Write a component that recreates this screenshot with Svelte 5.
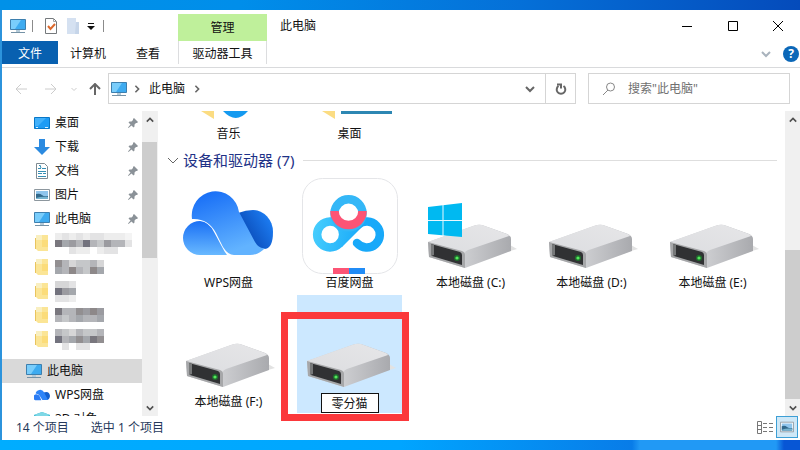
<script>
  const pinned = [
    { name: "桌面", icon: "desktop" },
    { name: "下载", icon: "download" },
    { name: "文档", icon: "document" },
    { name: "图片", icon: "picture" },
    { name: "此电脑", icon: "monitor" },
  ]

  // folders whose names are hidden behind a mosaic, "." is an empty cell
  const hidden = [
    ["fefefeefffg", "6a9b5bc9bbe", "..eff.fee.."],
    ["8bdccbd", "ab7bc7a"],
    ["dde", "59a", "eef"],
    ["6bb8979", "bcbabba"],
    ["bcdbccb", "5ba8a68", ".e.ee.."],
  ]

  const tones = {
    5: "#73737e",
    6: "#79777e",
    7: "#8d8889",
    8: "#928f91",
    9: "#9b9ba0",
    a: "#a4a7ac",
    b: "#b4b5b9",
    c: "#c5c7c9",
    d: "#d6d6d7",
    e: "#e3e3e4",
    f: "#ededed",
    g: "#f4f4f4",
  }

  const drives = [
    { name: "WPS网盘", icon: "wps" },
    { name: "百度网盘", icon: "baidu" },
    { name: "本地磁盘 (C:)", icon: "system" },
    { name: "本地磁盘 (D:)", icon: "drive" },
    { name: "本地磁盘 (E:)", icon: "drive" },
    { name: "本地磁盘 (F:)", icon: "drive" },
  ]

  let newName = $state("零分猫")
</script>

{#snippet monitor()}
  <svg class="icon" viewBox="0 0 16 16" aria-hidden="true">
    <path d="M0.5 1.5h15v10H0.5z" fill="#3eabf0" stroke="#3d7fae" />
    <path d="M1 2h10L5 11H1z" fill="#79cdfb" />
    <path d="M6 12h4v2H6z" fill="#b4cad8" />
    <path d="M1 14.5h14" stroke="#7592a6" />
  </svg>
{/snippet}

{#snippet picture()}
  <svg class="icon" viewBox="0 0 16 16" aria-hidden="true">
    <path d="M0.5 2.5h15v11H0.5z" fill="#fff" stroke="#8d979e" />
    <path d="M2 4h12v8H2z" fill="#8fc5ec" />
    <path d="M2 7q4-1 6 1t6 1v3H2z" fill="#31698b" />
    <path d="M2 11q6-2 12-1v2H2z" fill="#76b4cf" />
  </svg>
{/snippet}

{#snippet chevron(d)}
  <svg class="chevron" viewBox="0 0 10 10" aria-hidden="true"><path {d} /></svg>
{/snippet}

{#snippet scrollbar(before, size)}
  <div class="scrollbar">
    <button aria-label="向上滚动">{@render chevron("M1 7l4-4 4 4")}</button>
    <div class="track">
      <div style="flex-grow: {before}"></div>
      <div class="thumb" style="flex-grow: {size}"></div>
      <div style="flex-grow: {100 - before - size}"></div>
    </div>
    <button aria-label="向下滚动">{@render chevron("M1 3l4 4 4-4")}</button>
  </div>
{/snippet}

{#snippet disk()}
  <path d="M41 89L87 73l7-2-7-4z" fill="#e2e2e2" />
  <path d="M5 64L50 48q5-2 9-1l25 9q4 2 4 5v12L42 90 6 79z" fill="url(#disk-side)" />
  <path d="M5 64L50 48q5-2 9-1l25 9q2 1 2 2L45 72q-3 1-4 4z" fill="url(#disk-top)" />
  <path d="M5 64l34 9q3 1 3 4v13L6 79z" fill="#a6a7a9" />
  <path d="M8 66l29 8q2 1 2 3v10L9 78z" fill="#303133" />
  <path d="M8 66l3 1v10l-3 1z" fill="#77797a" />
  <circle cx="34" cy="80" r="3" fill="#206b2e" />
  <circle cx="34" cy="80" r="1.6" fill="#53ea5b" />
{/snippet}

{#snippet driveIcon(kind)}
  <svg class="drive-icon" viewBox="0 0 96 96" aria-hidden="true">
    {#if kind === "wps"}
      <path d="M57 35Q65 32 72 32A20 22 0 0 1 92 54Q92 71 83 71Q77 71 72 64z" fill="url(#wps-right)" />
      <path
        d="M11 41A23.5 24 0 0 1 58 34L74 64Q78 71 84 70Q78 77 69 77H53Q47 77 42 69L35 55Q27 40 11 41z"
        fill="url(#wps-mid)"
      />
      <path d="M19 77A17 17 0 1 1 19 43Q28 44 33 54L40 67Q43 73 46 77z" fill="url(#wps-left)" />
    {:else if kind === "baidu"}
      <rect x="0.5" y="0.5" width="95" height="95" rx="20" fill="#fff" stroke="#e4e5e8" />
      <g fill="none" stroke-width="8.5" stroke-linecap="round">
        <path d="M37 66A13 13 0 1 1 37 47" stroke="url(#baidu-left)" />
        <path d="M37 47A13 13 0 0 1 37 66L56 47" stroke="url(#baidu-left)" />
        <path d="M56 47A13 13 0 1 1 55 65" stroke="#18a9f9" />
        <circle cx="46.500" cy="35.300" r="14" stroke="#34b7f7" />
        <path d="M32.500 33a14 14 0 1 0 28 0" stroke="#fc5475" stroke-linecap="butt" />
      </g>
      <path d="M31 90h16v6H31z" fill="#fc5475" />
      <path d="M47 90h16v6H47z" fill="#218cf6" />
    {:else}
      {@render disk()}
      {#if kind === "system"}
        <path d="M5 29l34-4v34L5 56z" fill="#00b9f1" />
        <path d="M20 27v31M5 42.5h34" stroke="#e9f8fe" />
      {/if}
    {/if}
  </svg>
{/snippet}

<svg class="defs" aria-hidden="true">
  <defs>
    <linearGradient id="disk-top" x1="0" y1="1" x2="1" y2="0">
      <stop offset="0" stop-color="#dcdde0" />
      <stop offset="1" stop-color="#e6e6e8" />
    </linearGradient>
    <linearGradient id="disk-side" x1="0" y1="0" x2="1" y2="0">
      <stop offset="0.4" stop-color="#cfd0d3" />
      <stop offset="1" stop-color="#a9aaae" />
    </linearGradient>
    <linearGradient id="wps-mid" x1="0" y1="0" x2="0.4" y2="1">
      <stop offset="0" stop-color="#1269f6" />
      <stop offset="1" stop-color="#62b3ff" />
    </linearGradient>
    <linearGradient id="wps-left" x1="0" y1="0" x2="0" y2="1">
      <stop offset="0" stop-color="#1a70f5" />
      <stop offset="1" stop-color="#69b9ff" />
    </linearGradient>
    <linearGradient id="wps-right" x1="0.9" y1="0.3" x2="0.3" y2="0.7">
      <stop offset="0" stop-color="#1b79ee" />
      <stop offset="1" stop-color="#0c50bd" />
    </linearGradient>
    <linearGradient id="baidu-left" gradientUnits="userSpaceOnUse" x1="12" y1="50" x2="60" y2="60">
      <stop offset="0" stop-color="#46cdfd" />
      <stop offset="1" stop-color="#18a9f9" />
    </linearGradient>
  </defs>
</svg>

<div class="desktop">
  <div class="window">
    <header class="ribbon">
      <div class="quick">
        {@render monitor()}
        <i class="sep"></i>
        <button aria-label="属性">
          <svg class="icon" viewBox="0 0 16 16">
            <path d="M2.5 0.5h8l3 3v12h-11z" fill="#fff" stroke="#75797c" />
            <path d="M10.5 0.5v3h3" fill="none" stroke="#a1a4a6" />
            <path d="M5 8l2.5 3L12 6" fill="none" stroke="#dc692d" stroke-width="2" />
          </svg>
        </button>
        <button aria-label="新建文件夹">
          <svg class="icon" viewBox="0 0 16 16">
            <path d="M2 0h9v4h3v12H2z" fill="#d5e1f1" />
            <path d="M11 4h3v12h-4z" fill="#c6d5e9" />
          </svg>
        </button>
        <button class="more" aria-label="自定义快速访问工具栏">
          <svg viewBox="0 0 8 8"><path d="M1 1.5h6" stroke="#111" /><path d="M0 4h8L4 8z" fill="#111" /></svg>
        </button>
        <i class="sep"></i>
      </div>
      <div class="manage">管理</div>
      <div class="title">
        <span>此电脑</span>
        <div class="controls">
          <button aria-label="最小化"><svg viewBox="0 0 10 10"><path d="M0 5.5h10" /></svg></button>
          <button aria-label="最大化"><svg viewBox="0 0 10 10"><path d="M0.5 0.5h9v9h-9z" /></svg></button>
          <button aria-label="关闭"><svg viewBox="0 0 10 10"><path d="M0 0l10 10M10 0L0 10" /></svg></button>
        </div>
      </div>
      <nav class="tabs">
        <button class="file">文件</button>
        <button>计算机</button>
        <button>查看</button>
      </nav>
      <button class="tools">驱动器工具</button>
      <div class="help">
        <button class="expand" aria-label="展开功能区">{@render chevron("M1 3l4 4 4-4")}</button>
        <button class="question" aria-label="帮助">?</button>
      </div>
    </header>

    <div class="location">
      <div class="history">
        <button class="off" aria-label="后退">
          <svg viewBox="0 0 12 12"><path d="M12 6H1M6 1L1 6l5 5" /></svg>
        </button>
        <button class="off" aria-label="前进">
          <svg viewBox="0 0 12 12"><path d="M0 6h11M6 1l5 5-5 5" /></svg>
        </button>
        <button class="off recent" aria-label="最近浏览的位置">
          <svg viewBox="0 0 12 12"><path d="M1 4l5 5 5-5" /></svg>
        </button>
        <button class="up" aria-label="上移">
          <svg viewBox="0 0 12 12"><path d="M6 12V1M1 6l5-5 5 5" /></svg>
        </button>
      </div>
      <div class="address">
        {@render monitor()}
        {@render chevron("M3 1l4 4-4 4")}
        <a href="#pc">此电脑</a>
        {@render chevron("M3 1l4 4-4 4")}
        <button class="drop" aria-label="以前的位置">{@render chevron("M1 3l4 4 4-4")}</button>
        <button class="refresh" aria-label="刷新">
          <svg viewBox="0 0 12 12"><path d="M8.500 3A4.300 4.300 0 1 1 3.500 3M2 1.500h4v4" /></svg>
        </button>
      </div>
      <label class="search">
        <svg viewBox="0 0 14 14" aria-hidden="true"><circle cx="8.5" cy="5" r="4" /><path d="M6 8L1 13" /></svg>
        <input type="text" aria-label="搜索" placeholder={'搜索"此电脑"'} />
      </label>
    </div>

    <div class="body">
      <aside>
        <nav class="tree">
          {#each pinned as item}
            <a href="#item">
              {#if item.icon === "monitor"}
                {@render monitor()}
              {:else if item.icon === "picture"}
                {@render picture()}
              {:else}
                <svg class="icon" viewBox="0 0 16 16" aria-hidden="true">
                  {#if item.icon === "desktop"}
                    <path d="M0.5 2.5h15v11H0.5z" fill="#1e9cf5" stroke="#0877c7" />
                    <path d="M1 3h11L4 11H1z" fill="#42b1fb" />
                    <path d="M2 12.5h2M11 12.5h3" stroke="#d9f0ff" />
                  {:else if item.icon === "download"}
                    <path d="M5 0h6v8h5l-8 8-8-8h5z" fill="#2b8ae0" />
                  {:else}
                    <path d="M2.5 0.5h8l3 3v12h-11z" fill="#fff" stroke="#7f8b92" />
                    <path d="M4 5.5h3M8 5.5h4M4 8.5h8M4 10.5h4M9 10.5h3M4 13.5h8M5 3l1-1 1 3" fill="none" stroke="#368fb5" />
                  {/if}
                </svg>
              {/if}
              <span>{item.name}</span>
              <svg class="pin" viewBox="0 0 10 10" aria-hidden="true">
                <path d="M6 0l4 4-1 1H8L6.500 6.500V8.500L5.500 9.500 3.500 7.500 0.500 10 0 9.500 2.500 6.500 0.500 4.500 1.500 3.500h2L5 2V1z" />
              </svg>
            </a>
          {/each}
          {#each hidden as rows}
            <a href="#folder" aria-label="文件夹">
              <svg class="icon" viewBox="0 0 16 16" aria-hidden="true">
                <path d="M2 0h12v16H4l-2-2z" fill="#fbe596" />
                <path d="M2 0h6v5H2z" fill="#f9efc0" />
                <path d="M8 5h6v7H8z" fill="#fbdc7a" />
                <path d="M1.500 3v11" stroke="#e9c45e" />
              </svg>
              <svg class="mosaic" viewBox="0 0 77 {rows.length * 7}" style="height: {rows.length * 7}px" aria-hidden="true">
                {#each rows as row, y}
                  {#each row as cell, x}
                    <rect x={x * 7} y={y * 7} width="7" height="7" fill={tones[cell] ?? "none"} />
                  {/each}
                {/each}
              </svg>
            </a>
          {/each}
          <a class="root current" href="#pc">{@render monitor()}<span>此电脑</span></a>
          <a href="#wps">
            <svg class="icon" viewBox="0 10 96 76" aria-hidden="true">
              <path d="M57 33Q92 20 96 54Q92 80 72 77z" fill="#1260cf" />
              <path d="M10 39A26 24 0 0 1 60 32L84 78H50L35 54Q27 40 10 39z" fill="#2d84f8" />
              <path d="M19 79A18 18 0 1 1 19 45Q29 46 34 56L44 79z" fill="#2b7cf4" />
            </svg>
            <span>WPS网盘</span>
          </a>
          <a href="#objects">
            <svg class="icon" viewBox="0 0 16 16" aria-hidden="true">
              <path d="M0 4l8-3 8 3v8l-8 4-8-4z" fill="#35b5d0" />
              <path d="M0 4l8-3 8 3-8 3z" fill="#7fd8e6" />
            </svg>
            <span>3D 对象</span>
          </a>
        </nav>
        {@render scrollbar(5, 43)}
      </aside>

      <main>
        <div class="grid folders">
          <a class="folder" href="#music">
            <svg viewBox="0 0 96 8" aria-hidden="true">
              <path d="M20 0h13v8z" fill="#fbdc82" />
              <path d="M42 0h25Q55 14 42 0z" fill="#149af0" />
            </svg>
            <span>音乐</span>
          </a>
          <a class="folder" href="#desktop">
            <svg viewBox="0 0 96 8" aria-hidden="true">
              <path d="M20 0h13v8z" fill="#fbdc82" />
              <path d="M39 0h51v3H39z" fill="#2d87b3" />
            </svg>
            <span>桌面</span>
          </a>
        </div>

        <button class="group">
          {@render chevron("M0 3l5 5 5-5")}
          <span>设备和驱动器 (7)</span>
          <i></i>
        </button>

        <div class="grid">
          {#each drives as drive}
            <a class="tile" href="#drive">
              {@render driveIcon(drive.icon)}
              <span>{drive.name}</span>
            </a>
          {/each}
          <div class="tile selected">
            {@render driveIcon("drive")}
            <input type="text" aria-label="重命名" bind:value={newName} />
            <div class="frame"></div>
          </div>
        </div>
      </main>
      {@render scrollbar(45, 55)}
    </div>

    <footer>
      <span>14 个项目</span>
      <span>选中 1 个项目</span>
      <div class="views">
        <button aria-label="详细信息">
          <svg class="list-icon" viewBox="0 0 16 13">
            <path d="M0.500 0.500h4v12h-4zM0.500 4.500h4M0.500 8.500h4" />
            <path d="M6 2.500h4M12 2.500h4M6 6.500h4M12 6.500h4M6 10.500h4M12 10.500h4" />
          </svg>
        </button>
        <button class="active" aria-label="大图标">{@render picture()}</button>
      </div>
    </footer>
  </div>
</div>

<style>
  :global(body) {
    margin: 0;
  }

  .desktop {
    box-sizing: border-box;
    display: flex;
    min-height: 100vh;
    padding: 10px 0 10px 2px;
    background:
      linear-gradient(90deg, #0091e8, #008eea 30%, #0570d8 65%, #054bbb) top / 100% 10px no-repeat,
      linear-gradient(90deg, #00adff, #00a5ff 50%, #087ce8 79%, #2199f5 80%, #2199f5 97%, #0756d5 98%) bottom / 100% 10px no-repeat,
      #2c93dc;
    font-family: "Noto Sans", "Noto Sans CJK SC", sans-serif;
    font-size: 12px;
    line-height: 18px;
    color: #111;
  }

  .defs {
    position: absolute;
    width: 0;
    height: 0;
  }

  button,
  input {
    padding: 0;
    border: 0;
    background: none;
    font: inherit;
    color: inherit;
  }

  button {
    display: flex;
    align-items: center;
    justify-content: center;
  }

  a {
    color: inherit;
    text-decoration: none;
  }

  svg {
    display: block;
    flex: none;
  }

  .icon {
    width: 16px;
    height: 16px;
  }

  .chevron {
    width: 10px;
    height: 10px;
    fill: none;
    stroke: #666;
    stroke-width: 2;
  }

  .window {
    flex: 1;
    min-width: 0;
    display: flex;
    flex-direction: column;
    background: #fff;
  }

  .ribbon {
    display: grid;
    grid-template-columns: 176px 89px 1fr;
    grid-template-rows: 31px 26px;
    border-bottom: 1px solid #d9dadc;
  }

  .quick {
    display: flex;
    align-items: center;
    padding-left: 8px;
    gap: 6px;
  }

  .quick .sep {
    width: 1px;
    height: 12px;
    background: #8b8b8b;
  }

  .quick .sep:last-child {
    margin-left: 2px;
  }

  .quick button:nth-of-type(1) {
    margin-left: 4px;
  }

  .more svg {
    width: 8px;
    height: 8px;
  }

  .manage {
    margin-top: 4px;
    background: #bff09b;
    text-align: center;
    line-height: 28px;
    height: 27px;
  }

  .title,
  .help {
    display: flex;
    align-items: center;
    justify-content: space-between;
    padding-left: 13px;
  }

  .controls {
    display: flex;
  }

  .controls button {
    width: 46px;
    height: 30px;
  }

  .controls button:last-child {
    width: 44px;
  }

  .controls svg {
    width: 10px;
    height: 10px;
    fill: none;
    stroke: #000;
  }

  .tabs {
    display: flex;
  }

  .tabs button,
  .tools {
    box-sizing: border-box;
    height: 23px;
    padding-top: 2px;
  }

  .tabs button {
    flex: 1 1 62px;
  }

  .tabs .file {
    flex: 0 0 56px;
    background: #0860b0;
    color: #fff;
  }

  .tools {
    border: solid #dcdddf;
    border-width: 0 1px;
  }

  .help {
    justify-content: flex-end;
    gap: 12px;
    padding-right: 1px;
  }

  .expand .chevron {
    stroke: #a9b3bd;
  }

  .question {
    width: 16px;
    height: 16px;
    border-radius: 50%;
    background: #0b67b8;
    color: #fff;
    font-weight: 700;
    line-height: 16px;
  }

  .location {
    display: flex;
    padding: 5px 10px 7px 0;
  }

  .history {
    display: flex;
    align-items: center;
    width: 93px;
    padding-left: 13px;
    gap: 18px;
  }

  .history svg {
    width: 12px;
    height: 12px;
    fill: none;
    stroke: #666;
    stroke-width: 2;
  }

  .history .off svg {
    stroke: #ccc;
    stroke-width: 1;
  }

  .history .recent {
    margin-left: -4px;
  }

  .history .recent svg {
    width: 6px;
    height: 6px;
    stroke-width: 2;
  }

  .history .up {
    margin-left: -6px;
  }

  .address,
  .search {
    box-sizing: border-box;
    display: flex;
    align-items: center;
    height: 31px;
    min-width: 0;
    border: 1px solid #d5d5d5;
  }

  .address {
    flex: 1;
    gap: 6px;
    padding-left: 2px;
  }

  .address > .chevron {
    width: 8px;
    height: 8px;
  }

  .address a {
    padding: 0 2px;
  }

  .drop {
    margin-left: auto;
    padding: 0 4px;
  }

  .refresh {
    align-self: stretch;
    width: 30px;
    border-left: 1px solid #d5d5d5;
  }

  .refresh svg {
    width: 12px;
    height: 12px;
    fill: none;
    stroke: #666;
    stroke-width: 2;
  }

  .search {
    flex: 0 1 202px;
    margin-left: 12px;
    padding-left: 13px;
    gap: 12px;
  }

  .search svg {
    width: 14px;
    height: 14px;
    fill: none;
    stroke: #888;
  }

  .search input {
    flex: 1;
    min-width: 0;
    outline: none;
  }

  .search input::placeholder {
    color: #707070;
    opacity: 1;
  }

  .body {
    flex: 1;
    display: flex;
    min-height: 0;
  }

  aside {
    display: flex;
    width: 155px;
    border-right: 1px solid #f1f1f1;
  }

  .tree {
    flex: 1;
    height: 0;
    min-height: 100%;
    overflow: hidden;
  }

  .tree a {
    display: flex;
    align-items: center;
    height: 24px;
    padding: 0 4px 0 32px;
    gap: 5px;
  }

  .tree a.root {
    margin-top: 8px;
    padding-left: 24px;
  }

  .tree a.current {
    background: #d9d9d9;
  }

  .pin {
    width: 10px;
    height: 10px;
    margin-left: auto;
    fill: #8b9298;
  }

  .mosaic {
    width: 77px;
  }

  .scrollbar {
    display: flex;
    flex-direction: column;
    width: 15px;
    background: #f0f0f0;
  }

  .scrollbar button {
    height: 17px;
  }

  .scrollbar .chevron {
    width: 8px;
    height: 8px;
    stroke: #505050;
  }

  .track {
    flex: 1;
    display: flex;
    flex-direction: column;
  }

  .thumb {
    background: #cdcdcd;
  }

  main {
    flex: 1;
    min-width: 0;
  }

  .grid {
    display: grid;
    grid-template-columns: repeat(auto-fill, 105px);
    gap: 1px 16px;
    padding-left: 18px;
  }

  .folder {
    display: flex;
    flex-direction: column;
    align-items: center;
    gap: 6px;
  }

  .folder svg {
    width: 96px;
    height: 8px;
  }

  .group {
    width: 100%;
    margin: 7px 0 6px;
    padding: 0 8px 0 10px;
    gap: 5px;
    font-size: 15px;
    line-height: 20px;
    color: #1e3287;
  }

  .group .chevron {
    stroke-width: 1;
  }

  .group i {
    flex: 1;
    height: 1px;
    margin-left: 4px;
    background: #dedede;
  }

  .tile {
    display: flex;
    flex-direction: column;
    align-items: center;
    height: 116px;
    padding-top: 2px;
    white-space: nowrap;
  }

  .tile.selected {
    position: relative;
    background: #cce8ff;
  }

  .drive-icon {
    width: 96px;
    height: 96px;
  }

  .tile input {
    box-sizing: border-box;
    width: 58px;
    height: 20px;
    border: 1px solid #111;
    background: #fff;
    text-align: center;
    outline: none;
  }

  /* highlight drawn over the renamed drive */
  .frame {
    position: absolute;
    inset: 17px -7px -8px -16px;
    border: 7px solid #fb383b;
    pointer-events: none;
  }

  footer {
    display: flex;
    align-items: center;
    height: 24px;
    padding-left: 14px;
    gap: 22px;
    color: #26395b;
  }

  .views {
    display: flex;
    align-self: stretch;
    margin-left: auto;
    padding-right: 2px;
    gap: 3px;
  }

  .views button {
    height: 22px;
  }

  .views .active {
    box-sizing: border-box;
    width: 22px;
    border: 1px solid #3d9fd5;
    background: #cfe8f7;
  }

  .views .active .icon {
    width: 14px;
    height: 14px;
  }

  .list-icon {
    width: 16px;
    height: 13px;
    fill: none;
    stroke: #777;
  }
</style>
